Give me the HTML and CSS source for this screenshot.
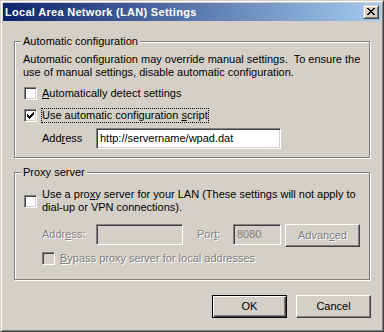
FILE: index.html
```html
<!DOCTYPE html>
<html>
<head>
<meta charset="utf-8">
<link rel="stylesheet" href="styles.css">
</head>
<body>
<div class="window">
  <div class="titlebar">
    <span class="title">Local Area Network (LAN) Settings</span>
    <span class="close-btn"><svg width="8" height="7" viewBox="0 0 8 7" shape-rendering="crispEdges"><path d="M0 0h2v1h-2zM6 0h2v1h-2zM1 1h2v1h-2zM5 1h2v1h-2zM2 2h4v1h-4zM3 3h2v1h-2zM2 4h4v1h-4zM1 5h2v1h-2zM5 5h2v1h-2zM0 6h2v1h-2zM6 6h2v1h-2z" fill="#000"/></svg></span>
  </div>
  <div class="content">
    <div class="group group-auto">
      <span class="group-label">Automatic configuration</span>
      <p class="desc">Automatic configuration may override manual settings.&nbsp; To ensure the<br>use of manual settings, disable automatic configuration.</p>
      <div class="check-row row-detect">
        <span class="checkbox"></span>
        <span class="check-label"><u>A</u>utomatically detect settings</span>
      </div>
      <div class="check-row row-script">
        <span class="checkbox"><svg width="7" height="7" viewBox="0 0 7 7" shape-rendering="crispEdges"><path d="M0 2h1v1h1v1h1v-1h1v-1h1v-1h1v-1h1v3h-1v1h-1v1h-1v1h-1v1h-1v-1h-1v-1h-1z" fill="#000"/></svg></span>
        <span class="check-label focus">Use automatic configuration <u>s</u>cript</span>
      </div>
      <div class="field-row">
        <span class="field-label">Add<u>r</u>ess</span>
        <span class="textbox textbox-url">http://servername/wpad.dat</span>
      </div>
    </div>

    <div class="group group-proxy">
      <span class="group-label">Proxy server</span>
      <div class="proxy-row">
        <span class="checkbox"></span>
        <span class="check-label">Use a pro<u>x</u>y server for your LAN (These settings will not apply to<br>dial-up or VPN connections).</span>
      </div>
      <div class="proxy-fields">
        <span class="field-label disabled">Addr<u>e</u>ss:</span>
        <span class="textbox textbox-off textbox-addr"></span>
        <span class="field-label port-label disabled">Por<u>t</u>:</span>
        <span class="textbox textbox-off textbox-port">8080</span>
        <span class="btn btn-adv disabled">Advan<u>c</u>ed</span>
      </div>
      <div class="check-row bypass-row">
        <span class="checkbox checkbox-off"></span>
        <span class="check-label disabled"><u>B</u>ypass proxy server for local addresses</span>
      </div>
    </div>

    <div class="buttons">
      <span class="btn btn-default">OK</span>
      <span class="btn">Cancel</span>
    </div>
  </div>
</div>
</body>
</html>
```

FILE: styles.css
```css
* {
  box-sizing: border-box;
}

body {
  margin: 0;
  font-family: "Liberation Sans", Arial, sans-serif;
  font-size: 11px;
  line-height: 13px;
  color: #000;
}

.window {
  width: 384px;
  height: 332px;
  background: #d4d0c8;
  border: 1px solid;
  border-color: #d4d0c8 #404040 #404040 #d4d0c8;
  box-shadow: inset 1px 1px #fff, inset -1px -1px #808080;
  padding: 2px;
  display: flex;
  flex-direction: column;
}

.titlebar {
  height: 18px;
  flex: none;
  background: linear-gradient(to right, #0a246a, #a6caf0);
  display: flex;
  align-items: center;
  justify-content: space-between;
  padding: 0 2px;
}

.title {
  color: #fff;
  font-weight: bold;
  letter-spacing: 0.3px;
  white-space: nowrap;
}

.close-btn {
  width: 16px;
  height: 14px;
  background: #d4d0c8;
  border: 1px solid;
  border-color: #d4d0c8 #404040 #404040 #d4d0c8;
  box-shadow: inset 1px 1px #fff, inset -1px -1px #808080;
  display: flex;
  padding: 2px 0 0 3px;
}

.close-btn svg {
  display: block;
}

.content {
  flex: 1;
  padding: 0 11px;
  display: flex;
  flex-direction: column;
}

.group {
  position: relative;
  border: 1px solid #808080;
  box-shadow: inset 1px 1px #fff, 1px 1px #fff;
  flex: none;
}

.group-label {
  position: absolute;
  top: -7px;
  left: 6px;
  padding: 0 2px;
  background: #d4d0c8;
  white-space: nowrap;
}

.group-auto {
  margin-top: 20px;
  height: 117px;
  padding: 11px 8px 8px 8px;
}

.group-proxy {
  margin-top: 14px;
  height: 108px;
  padding: 15px 8px 0 8px;
}

.desc {
  margin: 0;
  white-space: nowrap;
}

.check-row {
  display: flex;
  align-items: center;
  height: 13px;
  padding-left: 1px;
}

.row-detect {
  margin-top: 8px;
}

.row-script {
  margin-top: 9px;
}

.checkbox {
  width: 13px;
  height: 13px;
  flex: none;
  background: #fff;
  border: 1px solid;
  border-color: #808080 #fff #fff #808080;
  box-shadow: inset 1px 1px #404040, inset -1px -1px #d4d0c8;
  display: flex;
  align-items: center;
  justify-content: center;
}

.checkbox svg {
  display: block;
}

.checkbox-off {
  background: #d4d0c8;
}

.check-label {
  margin-left: 5px;
  white-space: nowrap;
}

.focus {
  border: 1px dotted #000;
  margin: -1px 0 -1px 4px;
}

.field-row {
  display: flex;
  align-items: center;
  margin-top: 6px;
  padding-left: 19px;
}

.field-label {
  width: 54px;
  flex: none;
  white-space: nowrap;
}

.textbox {
  height: 21px;
  flex: none;
  border: 1px solid;
  border-color: #808080 #fff #fff #808080;
  box-shadow: inset 1px 1px #404040, inset -1px -1px #d4d0c8;
  background: #fff;
  padding: 0 3px;
  line-height: 19px;
  white-space: nowrap;
}

.textbox-url {
  width: 185px;
}

.textbox-off {
  background: #d4d0c8;
  color: #808080;
}

.textbox-addr {
  width: 87px;
}

.textbox-port {
  width: 48px;
}

.proxy-row {
  display: flex;
  align-items: center;
  padding-left: 1px;
}

.proxy-fields {
  display: flex;
  align-items: flex-start;
  margin-top: 10px;
  padding-left: 19px;
}

.proxy-fields .field-label {
  line-height: 21px;
}

.port-label {
  width: 36px;
  margin-left: 14px;
}

.btn-adv {
  margin-left: 4px;
}

.bypass-row {
  margin-top: 5px;
  padding-left: 19px;
}

.disabled {
  color: #808080;
  text-shadow: 1px 1px #fff;
}

.buttons {
  display: flex;
  justify-content: flex-end;
  gap: 9px;
  margin-top: 15px;
  margin-right: -1px;
}

.btn {
  width: 75px;
  height: 23px;
  flex: none;
  background: #d4d0c8;
  border: 1px solid;
  border-color: #fff #404040 #404040 #fff;
  box-shadow: inset -1px -1px #808080;
  text-align: center;
  line-height: 21px;
  white-space: nowrap;
}

.btn-default {
  border-color: #000;
  box-shadow: inset 1px 1px #fff, inset -1px -1px #404040, inset -2px -2px #808080;
}
```
